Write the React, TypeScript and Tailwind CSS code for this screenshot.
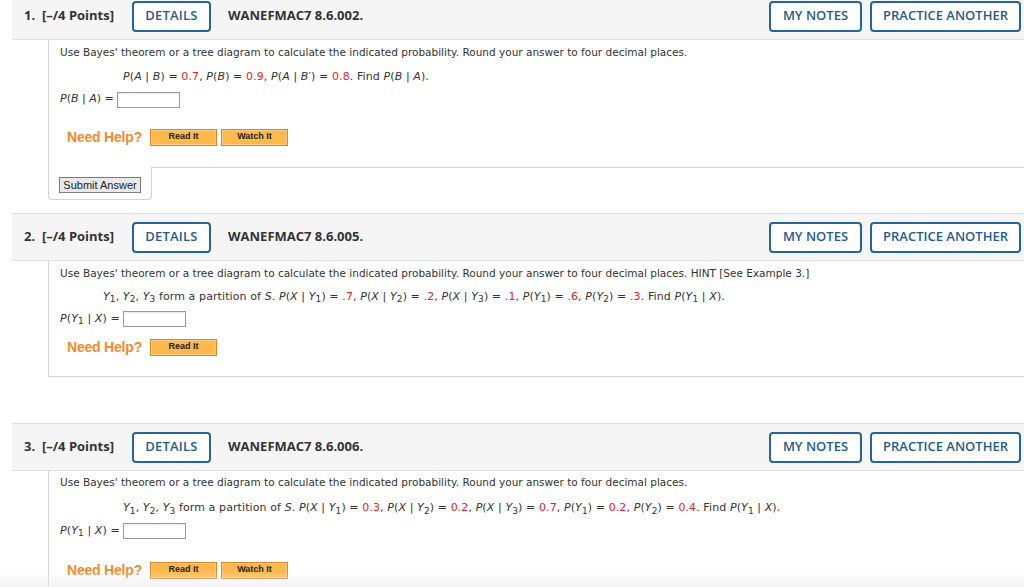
import React from "react";

const R = ({ children }: { children: React.ReactNode }) => (
  <span className="text-[#e8211c]">{children}</span>
);
const I = ({ children }: { children: React.ReactNode }) => <i>{children}</i>;

function Header({ n, code }: { n: number; code: string }) {
  return (
    <div className="ml-[12px] h-[48px] bg-[#f5f5f5] border-t border-b border-[#e0e0e0] flex items-center pl-[12px] pr-[3px] font-['Open_Sans',sans-serif]">
      <div className="w-[108px] text-[13px] font-bold text-[#333]">
        {n}.&nbsp; [–/4 Points]
      </div>
      <div className="w-[79px] h-[31px] border-2 border-[#266597] rounded-[4px] bg-white flex items-center justify-center text-[13px] font-semibold text-[#1e5d8c] tracking-[0.2px]">
        DETAILS
      </div>
      <div className="ml-[17px] text-[13px] font-bold text-[#333]">{code}</div>
      <div className="ml-auto w-[93px] h-[31px] border-2 border-[#266597] rounded-[4px] bg-white flex items-center justify-center text-[13px] font-semibold text-[#1e5d8c]">
        MY NOTES
      </div>
      <div className="ml-[8px] w-[151px] h-[31px] border-2 border-[#266597] rounded-[4px] bg-white flex items-center justify-center text-[13px] font-semibold text-[#1e5d8c]">
        PRACTICE ANOTHER
      </div>
    </div>
  );
}

function Box() {
  return (
    <span className="inline-block w-[63px] h-[16px] border border-[#9a9a9a] bg-white align-middle shadow-[inset_0_1px_1px_rgba(0,0,0,0.08)]" />
  );
}

function HelpBtn({ label }: { label: string }) {
  return (
    <div className="w-[67px] h-[17px] border border-[#e0832a] bg-[#fdb94c] flex items-center justify-center shadow-[inset_0_0_0_1px_#f9cd7d]">
      <span className="text-[9px] font-bold text-[#222] font-['Liberation_Sans',sans-serif]">{label}</span>
    </div>
  );
}

function NeedHelp({ watch }: { watch?: boolean }) {
  return (
    <div className="flex items-center h-[20px] pl-[7px]">
      <span className="text-[14px] font-bold text-[#f5892d] font-['Liberation_Sans',sans-serif] tracking-[-0.2px]">
        Need Help?
      </span>
      <div className="ml-[8px] flex gap-[4px]">
        <HelpBtn label="Read It" />
        {watch && <HelpBtn label="Watch It" />}
      </div>
    </div>
  );
}

const Y = ({ s }: { s: number }) => (
  <>
    <I>Y</I>
    <sub className="text-[9px]">{s}</sub>
  </>
);

export default function App() {
  return (
    <div className="relative w-[1024px] h-[587px] overflow-hidden bg-white font-['DejaVu_Sans',sans-serif] text-[11px] text-[#333]">
      <div className="-mt-[8px]">
        {/* Question 1 */}
        <Header n={1} code="WANEFMAC7 8.6.002." />
        <div className="ml-[48px] border-l border-[#d4d4d4] pl-[11px]">
          <div className="h-[24px] pt-[1px] flex items-center text-[10.5px]">
            Use Bayes' theorem or a tree diagram to calculate the indicated probability. Round your answer to four decimal places.
          </div>
          <div className="h-[24px] pt-[2px] flex items-center pl-[63px] tracking-[0.1px]">
            <span>
              <I>P</I>(<I>A</I> | <I>B</I>) = <R>0.7</R>, <I>P</I>(<I>B</I>) = <R>0.9</R>, <I>P</I>(<I>A</I> | <I>B</I>′) = <R>0.8</R>. Find <I>P</I>(<I>B</I> | <I>A</I>).
            </span>
          </div>
          <div className="h-[22px] pt-[1px] flex items-center">
            <span>
              <I>P</I>(<I>B</I> | <I>A</I>) =&nbsp;
            </span>
            <Box />
          </div>
          <div className="mt-[17px] pb-[20px]">
            <NeedHelp watch />
          </div>
        </div>
        <div className="flex ml-[48px]">
          <div className="w-[104px] h-[33px] border-l border-r border-b border-[#d4d4d4] rounded-b-[4px] pl-[10px] pt-[10px]">
            <div className="w-[82px] h-[16px] border border-[#7a7a7a] bg-[#e9e9e9] flex items-center justify-center text-[11px] text-[#222] font-['Liberation_Sans',sans-serif]">
              Submit Answer
            </div>
          </div>
          <div className="flex-1 border-t border-[#d4d4d4]" />
        </div>

        {/* Question 2 */}
        <div className="mt-[13px]">
          <Header n={2} code="WANEFMAC7 8.6.005." />
        </div>
        <div className="ml-[48px] border-l border-b border-[#d4d4d4] pl-[11px]">
          <div className="h-[25px] flex items-center text-[10.5px]">
            Use Bayes' theorem or a tree diagram to calculate the indicated probability. Round your answer to four decimal places. HINT [See Example 3.]
          </div>
          <div className="h-[22px] flex items-center pl-[43px] tracking-[0.1px]">
            <span>
              <Y s={1} />, <Y s={2} />, <Y s={3} /> form a partition of <I>S</I>. <I>P</I>(<I>X</I> | <Y s={1} />) = <R>.7</R>, <I>P</I>(<I>X</I> | <Y s={2} />) = <R>.2</R>, <I>P</I>(<I>X</I> | <Y s={3} />) = <R>.1</R>, <I>P</I>(<Y s={1} />) = <R>.6</R>, <I>P</I>(<Y s={2} />) = <R>.3</R>. Find <I>P</I>(<Y s={1} /> | <I>X</I>).
            </span>
          </div>
          <div className="h-[22px] flex items-center tracking-[0.1px]">
            <span>
              <I>P</I>(<Y s={1} /> | <I>X</I>) =&nbsp;
            </span>
            <Box />
          </div>
          <div className="mt-[7px] pb-[19px]">
            <NeedHelp />
          </div>
        </div>

        {/* Question 3 */}
        <div className="mt-[46px]">
          <Header n={3} code="WANEFMAC7 8.6.006." />
        </div>
        <div className="ml-[48px] border-l border-[#d4d4d4] pl-[11px] pb-[40px]">
          <div className="h-[24px] flex items-center text-[10.5px]">
            Use Bayes' theorem or a tree diagram to calculate the indicated probability. Round your answer to four decimal places.
          </div>
          <div className="h-[27px] flex items-center pl-[63px] tracking-[0.1px]">
            <span>
              <Y s={1} />, <Y s={2} />, <Y s={3} /> form a partition of <I>S</I>. <I>P</I>(<I>X</I> | <Y s={1} />) = <R>0.3</R>, <I>P</I>(<I>X</I> | <Y s={2} />) = <R>0.2</R>, <I>P</I>(<I>X</I> | <Y s={3} />) = <R>0.7</R>, <I>P</I>(<Y s={1} />) = <R>0.2</R>, <I>P</I>(<Y s={2} />) = <R>0.4</R>. Find <I>P</I>(<Y s={1} /> | <I>X</I>).
            </span>
          </div>
          <div className="h-[18px] flex items-center tracking-[0.1px]">
            <span>
              <I>P</I>(<Y s={1} /> | <I>X</I>) =&nbsp;
            </span>
            <Box />
          </div>
          <div className="mt-[20px]">
            <NeedHelp watch />
          </div>
        </div>
      </div>
      <div className="pointer-events-none absolute left-0 right-0 bottom-0 h-[16px] bg-gradient-to-b from-transparent to-[#eeeeee]/70" />
    </div>
  );
}
